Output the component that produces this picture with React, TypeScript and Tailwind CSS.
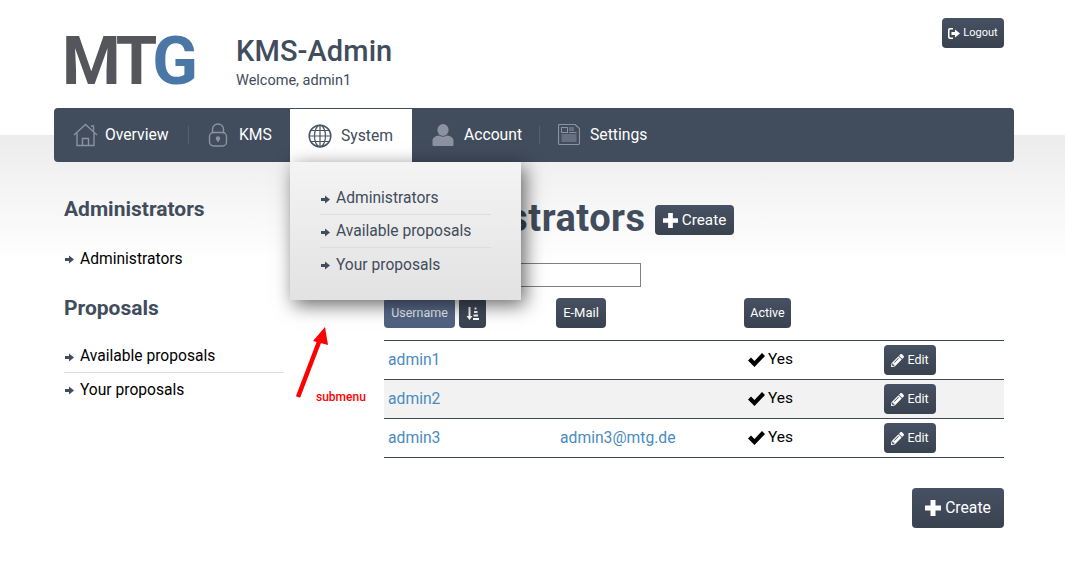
import React from "react";
import { FaPencilAlt } from "react-icons/fa";

const HomeIcon = () => (
  <svg width="25" height="24" viewBox="0 0 25 24" fill="none" stroke="#8b93a0" strokeWidth="1.4" className="shrink-0">
    <path d="M1 12 L12.5 1.5 L24 12" />
    <path d="M18 3 H20.5 V8" />
    <path d="M4 10 V22.5 H21 V10" />
    <path d="M9.5 22.5 V15.5 H15.5 V22.5" />
  </svg>
);
const LockIcon = () => (
  <svg width="20" height="24" viewBox="0 0 20 24" fill="none" stroke="#8b93a0" strokeWidth="1.4" className="shrink-0">
    <path d="M4.5 10 V6.5 A5.5 5.5 0 0 1 15.5 6.5 V10" />
    <rect x="1.5" y="9.5" width="17" height="13.5" rx="4" />
    <circle cx="10" cy="15.5" r="1.5" fill="#8b93a0" />
    <path d="M10 16 V19" />
  </svg>
);
const GlobeIcon = () => (
  <svg width="24" height="24" viewBox="0 0 24 24" fill="none" stroke="#4a5464" strokeWidth="1.2" className="shrink-0">
    <circle cx="12" cy="12" r="10.8" strokeWidth="1.5" />
    <ellipse cx="12" cy="12" rx="5.5" ry="10.8" />
    <path d="M12 1.2 V22.8 M1.2 12 H22.8 M2.8 6.5 H21.2 M2.8 17.5 H21.2" />
  </svg>
);
const PersonIcon = () => (
  <svg width="22" height="22" viewBox="0 0 22 22" fill="#8b93a0" className="shrink-0">
    <ellipse cx="11" cy="6" rx="5.6" ry="6" />
    <path d="M0.5 21 V17 C0.5 13.5 3.5 12 7 11.5 C9 13 13 13 15 11.5 C18.5 12 21.5 13.5 21.5 17 V21 C21.5 21.5 21 22 20 22 H2 C1 22 0.5 21.5 0.5 21 Z" />
  </svg>
);
const NewsIcon = () => (
  <svg width="22" height="21" viewBox="0 0 22 21" fill="none" stroke="#8b93a0" strokeWidth="1" className="shrink-0">
    <path d="M0.5 1.5 Q0.5 0.5 1.5 0.5 H17 L21.5 4.5 V19 Q21.5 20.5 20 20.5 H2 Q0.5 20.5 0.5 19 Z" strokeWidth="1.2" />
    <rect x="3.5" y="3.5" width="6" height="5" />
    <path d="M11 4 H16 M11 6 H16 M11 8.5 H18.5 M3.5 11 H18.5 M3.5 13 H18.5 M3.5 15 H18.5 M3.5 17 H18.5" />
  </svg>
);
const LogoutIcon = () => (
  <svg width="12" height="11" viewBox="0 0 12 11" fill="#fff" className="shrink-0">
    <path d="M5 0 H2 Q0 0 0 2 V9 Q0 11 2 11 H5 V9.5 H2.5 Q1.5 9.5 1.5 8.5 V2.5 Q1.5 1.5 2.5 1.5 H5 Z" />
    <path d="M3.5 4 H7 V1.5 L12 5.5 L7 9.5 V7 H3.5 Z" />
  </svg>
);
const SortIcon = () => (
  <svg width="13" height="13" viewBox="0 0 13 13" fill="#fff">
    <path d="M2.5 0 H4.5 V9 H6.5 L3.5 13 L0.5 9 H2.5 Z" />
    <rect x="8.5" y="0.5" width="2" height="2" />
    <rect x="8" y="4" width="3.5" height="2" />
    <rect x="7.5" y="7.5" width="4.5" height="2" />
    <rect x="7" y="11" width="6" height="2" />
  </svg>
);
const ArrowBullet = () => (
  <svg width="9" height="9" viewBox="0 0 9 9" fill="#414c5c" className="ml-[1px] mr-[6px] shrink-0">
    <path d="M0 3 H4 V0.5 L9 4.5 L4 8.5 V6 H0 Z" />
  </svg>
);
const PlusIcon = ({ size }: { size: number }) => (
  <svg width={size} height={size} viewBox="0 0 16 16" fill="#fff" className="shrink-0">
    <path d="M5.5 0 H10.5 V5.5 H16 V10.5 H10.5 V16 H5.5 V10.5 H0 V5.5 H5.5 Z" />
  </svg>
);
const CheckIcon = () => (
  <svg width="17" height="14" viewBox="0 0 17 14" fill="#000" className="shrink-0">
    <path d="M0 7.5 L3 4.5 L6.5 8 L14 0 L17 3 L6.5 14 Z" />
  </svg>
);
const RedArrow = () => (
  <svg width="40" height="78" viewBox="0 0 40 78" className="absolute left-[292px] top-[324px]">
    <path d="M6 73 L27 18" stroke="#f00" strokeWidth="4.5" fill="none" />
    <path d="M33 3 L36 21 L21 17 Z" fill="#f00" />
  </svg>
);

const btn = "bg-[linear-gradient(#465163,#39424f)] text-white rounded-[4px] flex items-center justify-center";

const NavItem = ({ icon, label, w, sep, active, gap }: { icon: React.ReactNode; label: string; w: string; sep?: boolean; active?: boolean; gap: string }) => (
  <div className={`${w} flex items-center ${active ? "bg-white text-[#414c5c] mt-[1px]" : "text-white"}`}>
    <div className={`flex items-center ${gap}`}>
      {icon}
      <span className="text-[15.7px] whitespace-nowrap">{label}</span>
    </div>
    {sep && <span className="ml-auto w-px h-[18px] bg-[#556070]" />}
  </div>
);

const Bullet = ({ label, color, line }: { label: string; color: string; line?: boolean }) => (
  <div className={`flex items-center h-[33px] pt-[2px] ${line ? "border-b" : ""} border-[#dddddd] ${color}`}>
    <ArrowBullet />
    <span className="text-[15.6px] whitespace-nowrap">{label}</span>
  </div>
);

const Row = ({ name, mail, alt }: { name: string; mail?: string; alt?: boolean }) => (
  <tr className={`h-[39px] border-b border-[#3d4756] ${alt ? "bg-[#f2f2f2]" : ""}`}>
    <td className="pl-[4px] text-[15.7px] text-[#4a8cc0]">{name}</td>
    <td className="pl-[4px] text-[15.7px] text-[#4a8cc0]">{mail}</td>
    <td className="pl-[4px]">
      <span className="flex items-center gap-[3px] text-[15.5px] text-black">
        <CheckIcon />
        Yes
      </span>
    </td>
    <td>
      <div className={`${btn} w-[52px] h-[30px] text-[12.5px] gap-[3px]`}>
        <FaPencilAlt className="text-[13px]" />
        Edit
      </div>
    </td>
  </tr>
);

export default function App() {
  return (
    <div className="relative h-[572px] w-[1065px] overflow-hidden bg-[linear-gradient(#ffffff_135px,#ececec_135px,#ffffff_262px)] [font-family:Roboto,sans-serif]">
      <header className="h-[108px] flex items-start pl-[62px] pr-[61px]">
        <div className="w-[174px] mt-[22px] text-[67px] leading-[78px] font-bold tracking-[-4px] text-[#54565b]">
          MT<span className="text-[#4a77a5]">G</span>
        </div>
        <div className="mt-[33px]">
          <div className="text-[29px] leading-[36px] font-medium tracking-[0.1px] text-[#414c5c]">KMS-Admin</div>
          <div className="mt-[2px] text-[14.5px] leading-[20px] text-[#414c5c]">Welcome, admin1</div>
        </div>
        <div className={`${btn} ml-auto mt-[18px] w-[62px] h-[30px] text-[11px] gap-[3px] pt-[1px]`}>
          <LogoutIcon />
          Logout
        </div>
      </header>

      <nav className="ml-[54px] w-[960px] h-[54px] bg-[#414c5c] rounded-[4px] flex text-white">
        <NavItem w="w-[135px] pl-[19px]" gap="gap-[7px]" icon={<HomeIcon />} label="Overview" sep />
        <NavItem w="w-[101px] pl-[19px]" gap="gap-[11px]" icon={<LockIcon />} label="KMS" />
        <NavItem w="w-[122px] pl-[18px]" gap="gap-[9px]" icon={<GlobeIcon />} label="System" active />
        <NavItem w="w-[128px] pl-[20px]" gap="gap-[10px]" icon={<PersonIcon />} label="Account" sep />
        <NavItem w="w-[200px] pl-[18px]" gap="gap-[10px]" icon={<NewsIcon />} label="Settings" />
      </nav>

      <div className="flex pl-[64px] pr-[61px]">
        <aside className="w-[220px] mr-[100px]">
          <h2 className="mt-[33px] text-[21px] leading-[28px] font-bold text-[#414c5c]">Administrators</h2>
          <div className="mt-[19px]">
            <Bullet label="Administrators" color="text-black" />
          </div>
          <h2 className="mt-[19px] text-[21px] leading-[28px] font-bold text-[#414c5c]">Proposals</h2>
          <div className="mt-[18px]">
            <Bullet label="Available proposals" color="text-black" line />
            <Bullet label="Your proposals" color="text-black" />
          </div>
        </aside>

        <main className="w-[620px]">
          <div className="mt-[35px] h-[42px] flex items-center">
            <h1 className="text-[38px] leading-[42px] font-bold tracking-[0.5px] text-[#414c5c] whitespace-nowrap w-[261px]">Administrators</h1>
            <div className={`${btn} ml-[10px] mt-[4px] pt-[1px] w-[79px] h-[30px] text-[15.3px] gap-[4px]`}>
              <PlusIcon size={15} />
              Create
            </div>
          </div>
          <input readOnly className="block mt-[24px] w-[257px] h-[24px] border border-[#808080] bg-white" />

          <table className="mt-[11px] w-[620px] table-fixed border-collapse">
            <colgroup>
              <col className="w-[172px]" />
              <col className="w-[188px]" />
              <col className="w-[140px]" />
              <col />
            </colgroup>
            <thead>
              <tr className="border-b border-[#3d4756]">
                <th className="pb-[12px] font-normal">
                  <div className="flex gap-[4px]">
                    <div className="bg-[linear-gradient(#5e7090,#4f6080)] text-[#e8ecf2] rounded-[4px] w-[71px] h-[30px] flex items-center justify-center text-[12.5px]">Username</div>
                    <div className={`${btn} w-[27px] h-[30px]`}><SortIcon /></div>
                  </div>
                </th>
                <th className="pb-[12px] font-normal">
                  <div className={`${btn} w-[50px] h-[30px] text-[13px]`}>E-Mail</div>
                </th>
                <th className="pb-[12px] font-normal">
                  <div className={`${btn} w-[47px] h-[30px] text-[12.5px]`}>Active</div>
                </th>
                <th />
              </tr>
            </thead>
            <tbody>
              <Row name="admin1" />
              <Row name="admin2" alt />
              <Row name="admin3" mail="admin3@mtg.de" />
            </tbody>
          </table>

          <div className="flex justify-end mt-[30px]">
            <div className={`${btn} w-[92px] h-[40px] text-[15.7px] gap-[4px]`}>
              <PlusIcon size={16} />
              Create
            </div>
          </div>
        </main>
      </div>

      <div className="absolute left-[290px] top-[162px] w-[231px] h-[138px] bg-[linear-gradient(#f4f4f4,#e2e2e2)] shadow-[4px_5px_18px_rgba(0,0,0,0.6)] px-[30px] pt-[20px]">
        <Bullet label="Administrators" color="text-[#414c5c]" line />
        <Bullet label="Available proposals" color="text-[#414c5c]" line />
        <Bullet label="Your proposals" color="text-[#414c5c]" />
      </div>

      <RedArrow />
      <span className="absolute left-[316px] top-[389px] text-[12px] leading-[16px] font-medium text-[#f00]">submenu</span>
    </div>
  );
}
